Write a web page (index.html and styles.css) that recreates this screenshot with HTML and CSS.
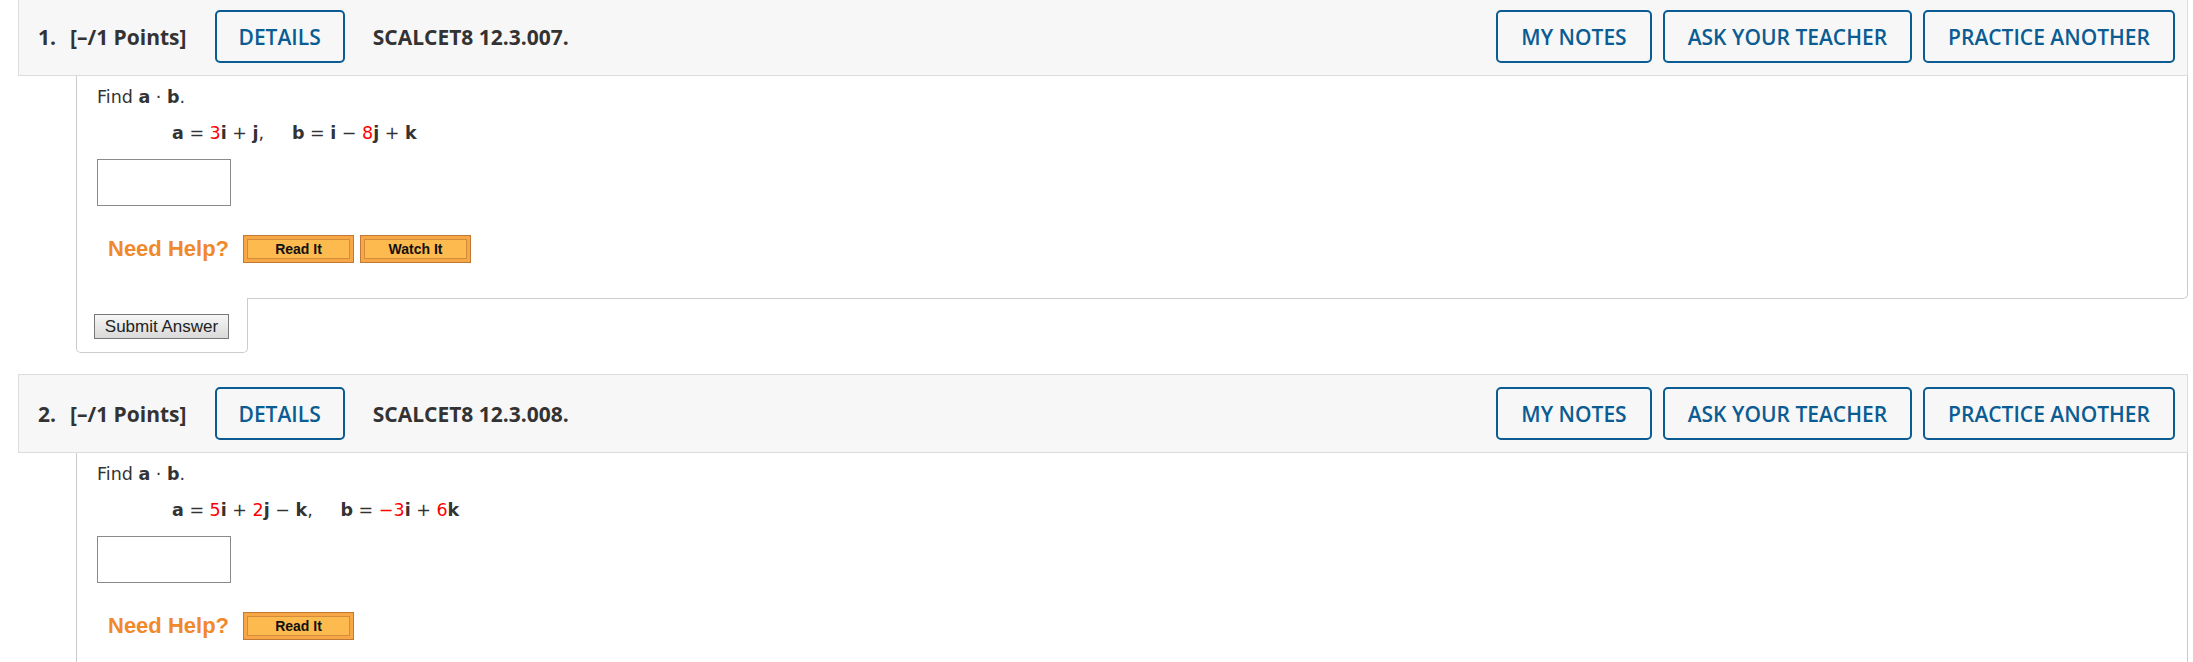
FILE: index.html
```html
<!DOCTYPE html>
<html>
<head>
<meta charset="utf-8">
<link rel="stylesheet" href="styles.css">
</head>
<body>
<div class="page">

  <div class="question">
    <div class="q-header">
      <div class="q-left">
        <span class="q-num">1.</span>
        <span class="q-points">[–/1 Points]</span>
        <span class="btn">DETAILS</span>
        <span class="q-code">SCALCET8 12.3.007.</span>
      </div>
      <div class="q-right">
        <span class="btn">MY NOTES</span>
        <span class="btn">ASK YOUR TEACHER</span>
        <span class="btn">PRACTICE ANOTHER</span>
      </div>
    </div>
    <div class="q-body">
      <div class="q-text">Find <b>a</b> · <b>b</b>.</div>
      <div class="q-math"><b>a</b> = <span class="red">3</span><b>i</b> + <b>j</b>,&nbsp;&nbsp;&nbsp;&nbsp; <b>b</b> = <b>i</b> − <span class="red">8</span><b>j</b> + <b>k</b></div>
      <div class="answer-box"></div>
      <div class="help-row">
        <span class="help-label">Need Help?</span>
        <span class="help-btn first"><span class="help-inner">Read It</span></span>
        <span class="help-btn"><span class="help-inner">Watch It</span></span>
      </div>
    </div>
    <div class="submit-tab">
      <span class="submit-btn">Submit Answer</span>
    </div>
  </div>

  <div class="question">
    <div class="q-header">
      <div class="q-left">
        <span class="q-num">2.</span>
        <span class="q-points">[–/1 Points]</span>
        <span class="btn">DETAILS</span>
        <span class="q-code">SCALCET8 12.3.008.</span>
      </div>
      <div class="q-right">
        <span class="btn">MY NOTES</span>
        <span class="btn">ASK YOUR TEACHER</span>
        <span class="btn">PRACTICE ANOTHER</span>
      </div>
    </div>
    <div class="q-body">
      <div class="q-text">Find <b>a</b> · <b>b</b>.</div>
      <div class="q-math"><b>a</b> = <span class="red">5</span><b>i</b> + <span class="red">2</span><b>j</b> − <b>k</b>,&nbsp;&nbsp;&nbsp;&nbsp; <b>b</b> = <span class="red">−3</span><b>i</b> + <span class="red">6</span><b>k</b></div>
      <div class="answer-box"></div>
      <div class="help-row">
        <span class="help-label">Need Help?</span>
        <span class="help-btn first"><span class="help-inner">Read It</span></span>
      </div>
    </div>
    <div class="submit-tab">
      <span class="submit-btn">Submit Answer</span>
    </div>
  </div>

</div>
</body>
</html>
```
FILE: styles.css
```css
html, body {
  margin: 0;
  padding: 0;
  background: #ffffff;
}

.page {
  margin: -3px 5px 0 18px;
}

.question {
  margin-bottom: 21px;
}

.q-header {
  display: flex;
  align-items: center;
  background: #f7f7f7;
  border: 1px solid #dcdcdc;
  padding: 12px 12px 12px 19px;
  font-family: "Open Sans", "Liberation Sans", sans-serif;
  font-weight: 700;
  font-size: 21px;
  color: #333333;
}

.q-left {
  display: flex;
  align-items: center;
  gap: 28px;
}

.q-num {
  margin-right: -14px;
}

.q-right {
  display: flex;
  align-items: center;
  gap: 11px;
  margin-left: auto;
}

.btn {
  display: flex;
  align-items: center;
  box-sizing: border-box;
  height: 53px;
  padding: 0 22px;
  border: 2px solid #0b5c92;
  border-radius: 5px;
  color: #0b5c92;
  font-weight: 600;
  background: #f7f7f7;
}

.q-right .btn {
  padding: 0 23px;
}

.q-body {
  margin-left: 58px;
  border: 1px solid #cccccc;
  border-top: none;
  border-bottom-right-radius: 5px;
  padding: 11px 20px 35px 20px;
  font-family: "DejaVu Sans", Verdana, sans-serif;
  font-size: 17.5px;
  color: #333333;
  background: #ffffff;
}

.q-text {
  line-height: 20px;
}

.q-math {
  line-height: 20px;
  margin-top: 16px;
  margin-left: 75px;
}

.red {
  color: #ff0000;
  font-weight: 400;
}

.answer-box {
  margin-top: 16px;
  width: 134px;
  height: 47px;
  box-sizing: border-box;
  border: 1px solid #8a8a8a;
  background: #ffffff;
}

.help-row {
  display: flex;
  align-items: center;
  margin-top: 29px;
  height: 28px;
}

.help-label {
  margin-left: 11px;
  margin-right: 14px;
  font-family: "Liberation Sans", Arial, sans-serif;
  font-weight: 700;
  font-size: 22px;
  color: #f0892c;
}

.help-btn {
  display: flex;
  box-sizing: border-box;
  width: 111px;
  height: 28px;
  border: 1px solid #c17a36;
  background: #f7a745;
  padding: 3px;
  margin-right: 6px;
}

.help-inner {
  flex: 1;
  display: flex;
  align-items: center;
  justify-content: center;
  border: 1px solid #d38c3c;
  background: #fdba4e;
  font-family: "Liberation Sans", Arial, sans-serif;
  font-weight: 700;
  font-size: 14px;
  color: #111111;
}

.submit-tab {
  margin-left: 58px;
  margin-top: -1px;
  width: 172px;
  box-sizing: border-box;
  border: 1px solid #cccccc;
  border-top: none;
  border-radius: 0 0 5px 5px;
  background: #ffffff;
  padding: 16px 0 13px 17px;
}

.submit-btn {
  display: flex;
  align-items: center;
  justify-content: center;
  box-sizing: border-box;
  width: 135px;
  height: 25px;
  border: 1px solid #777777;
  background: linear-gradient(#f6f6f6, #d9d9d9);
  font-family: "Liberation Sans", Arial, sans-serif;
  font-size: 17px;
  color: #222222;
}
```
